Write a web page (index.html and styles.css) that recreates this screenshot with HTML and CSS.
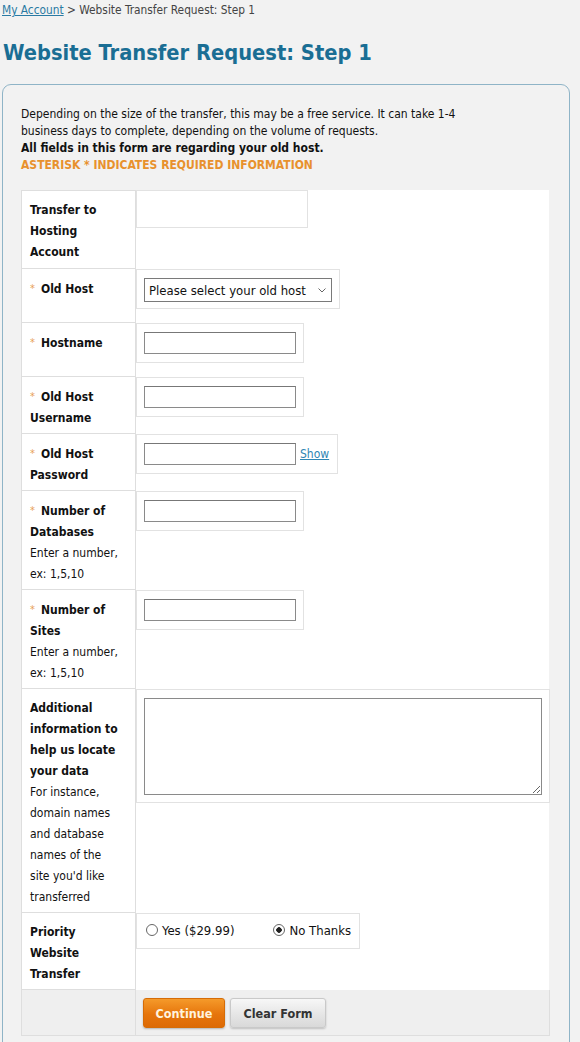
FILE: index.html
```html
<!DOCTYPE html>
<html>
<head>
<meta charset="utf-8">
<title>Website Transfer Request: Step 1</title>
<link rel="stylesheet" href="styles.css">
</head>
<body>
<div class="crumbs"><a href="#">My Account</a> &gt; Website Transfer Request: Step 1</div>
<h1 class="title">Website Transfer Request: Step 1</h1>
<div class="box">
  <p class="intro">Depending on the size of the transfer, this may be a free service. It can take 1-4 business days to complete, depending on the volume of requests.<br><b>All fields in this form are regarding your old host.</b><br><span class="req-note">ASTERISK * INDICATES REQUIRED INFORMATION</span></p>
  <div class="form-grid">
    <div class="lbl first"><b>Transfer to Hosting Account</b></div>
    <div class="fld"><div class="wrap empty"></div></div>

    <div class="lbl req"><b>Old Host</b></div>
    <div class="fld"><div class="wrap sel-wrap"><div class="sel-box"><select class="sel"><option>Please select your old host</option></select><svg class="chev" width="8" height="5" viewBox="0 0 8 5"><path d="M0.5 0.5 L4 4 L7.5 0.5" fill="none" stroke="#666" stroke-width="1"/></svg></div></div></div>

    <div class="lbl req"><b>Hostname</b></div>
    <div class="fld"><div class="wrap"><input class="txt" type="text"></div></div>

    <div class="lbl req"><b>Old Host Username</b></div>
    <div class="fld"><div class="wrap"><input class="txt" type="text"></div></div>

    <div class="lbl req"><b>Old Host Password</b></div>
    <div class="fld"><div class="wrap pw-wrap"><input class="txt" type="password"><a class="show" href="#">Show</a></div></div>

    <div class="lbl req"><b>Number of Databases</b><br>Enter a number, ex: 1,5,10</div>
    <div class="fld"><div class="wrap"><input class="txt" type="text"></div></div>

    <div class="lbl req"><b>Number of Sites</b><br>Enter a number, ex: 1,5,10</div>
    <div class="fld"><div class="wrap"><input class="txt" type="text"></div></div>

    <div class="lbl"><b>Additional information to help us locate your data</b><br>For instance, domain names and database names of the site you'd like transferred</div>
    <div class="fld"><div class="wrap ta-wrap"><textarea class="ta"></textarea></div></div>

    <div class="lbl"><b>Priority Website Transfer</b></div>
    <div class="fld"><div class="wrap radio-wrap">
      <label class="opt"><input class="rad" type="radio" name="prio">Yes ($29.99)</label>
      <label class="opt opt2"><input class="rad" type="radio" name="prio" checked>No Thanks</label>
    </div></div>

    <div class="lbl btn-lbl"></div>
    <div class="fld btn-fld">
      <button class="btn btn-go" type="button">Continue</button>
      <button class="btn btn-clear" type="button">Clear Form</button>
    </div>
  </div>
</div>
</body>
</html>
```
FILE: styles.css
```css
html, body {
  margin: 0;
  padding: 0;
  background: #f2f2f2;
}
body {
  font-family: "DejaVu Sans Condensed", "DejaVu Sans", Tahoma, sans-serif;
  font-size: 12px;
  color: #111;
}
.crumbs {
  font-size: 11.8px;
  color: #444;
  padding: 3px 0 0 2px;
  line-height: 14px;
}
.crumbs a {
  color: #2a7aa3;
}
.title {
  margin: 23px 0 0 3px;
  font-size: 21.7px;
  line-height: 26px;
  color: #1a6e94;
  font-weight: bold;
}
.box {
  margin: 18px 0 0 2px;
  width: 529px;
  border: 1px solid #8fb4c7;
  border-radius: 9px;
  padding: 21px 19px 20px 18px;
  background: #f2f2f2;
}
.intro {
  margin: 0 0 16px 0;
  max-width: 450px;
  line-height: 17px;
  font-size: 12px;
  color: #111;
}
.req-note {
  color: #e8912d;
  font-weight: bold;
}
.form-grid {
  display: grid;
  grid-template-columns: 115px 1fr;
  width: 528px;
  background: #fff;
}
.lbl {
  border: 1px solid #dedede;
  border-top: none;
  padding: 9px 16px 4px 8px;
  line-height: 21px;
  font-size: 12px;
  color: #111;
}
.lbl.first {
  border-top: 1px solid #dedede;
  padding-bottom: 5px;
}
.lbl b {
  font-weight: bold;
}
.req::before {
  content: "*";
  color: #e8a055;
  font-size: 11px;
  margin-right: 6px;
  vertical-align: 1px;
}
.fld {
  padding: 0 0 14px 0;
  display: flex;
  align-items: flex-start;
}
.wrap {
  border: 1px solid #e2e2e2;
  padding: 8px 7px 8px 7px;
  display: flex;
  align-items: center;
  background: #fff;
}
.wrap.empty {
  width: 170px;
  height: 36px;
  padding: 0;
}
.txt {
  box-sizing: border-box;
  width: 152px;
  height: 22px;
  border: 1px solid #8a8a8a;
  border-top-color: #777;
  padding: 0 3px;
  margin: 0;
  font-family: inherit;
  font-size: 12px;
  background: #fff;
}
.sel-wrap {
  padding: 8px 7px 6px 7px;
}
.sel-box {
  position: relative;
}
.sel {
  -webkit-appearance: none;
  appearance: none;
  box-sizing: border-box;
  width: 188px;
  height: 24px;
  border: 1px solid #7a7a7a;
  border-radius: 0;
  padding: 0 18px 0 4px;
  margin: 0;
  font-family: inherit;
  font-size: 13px;
  color: #111;
  background: #fff;
}
.chev {
  position: absolute;
  right: 6px;
  top: 10px;
}
.pw-wrap {
  padding-right: 8px;
}
.show {
  margin-left: 4px;
  color: #2f86b3;
  font-size: 12px;
}
.ta-wrap {
  flex: 1;
  padding: 8px 7px 7px 7px;
}
.ta {
  box-sizing: border-box;
  width: 398px;
  height: 97px;
  border: 1px solid #8a8a8a;
  margin: 0;
  padding: 2px;
  font-family: inherit;
  font-size: 12px;
}
.radio-wrap {
  padding: 9px 8px 10px 8px;
  width: 206px;
}
.opt {
  display: flex;
  align-items: center;
  flex-shrink: 0;
  white-space: nowrap;
  font-size: 13px;
  color: #111;
}
.opt2 {
  margin-left: 38px;
}
.rad {
  -webkit-appearance: none;
  appearance: none;
  flex-shrink: 0;
  width: 12px;
  height: 12px;
  border: 1px solid #666;
  border-radius: 50%;
  margin: 0 4px 2px 1px;
  background: #fff;
  box-sizing: border-box;
}
.rad:checked {
  background: radial-gradient(circle, #222 0 2.5px, #fff 3px);
}
.btn-lbl {
  background: #efefef;
}
.btn-fld {
  background: #efefef;
  padding: 8px 7px 7px 7px;
  border-bottom: 1px solid #dedede;
  border-right: 1px solid #dedede;
  gap: 5px;
}
.btn {
  height: 30px;
  font-family: inherit;
  font-size: 12.5px;
  font-weight: bold;
  border-radius: 3px;
  margin: 0;
  cursor: pointer;
}
.btn-go {
  width: 82px;
  color: #fff3de;
  border: 1px solid #d66c06;
  background: linear-gradient(#f59a2a, #e6750c 55%, #dd6a05);
  box-shadow: 0 1px 2px rgba(0,0,0,0.25);
}
.btn-clear {
  width: 96px;
  color: #333;
  border: 1px solid #c9c9c9;
  background: linear-gradient(#f7f7f7, #e4e4e4 60%, #d9d9d9);
  box-shadow: 0 1px 2px rgba(0,0,0,0.2);
}
```
